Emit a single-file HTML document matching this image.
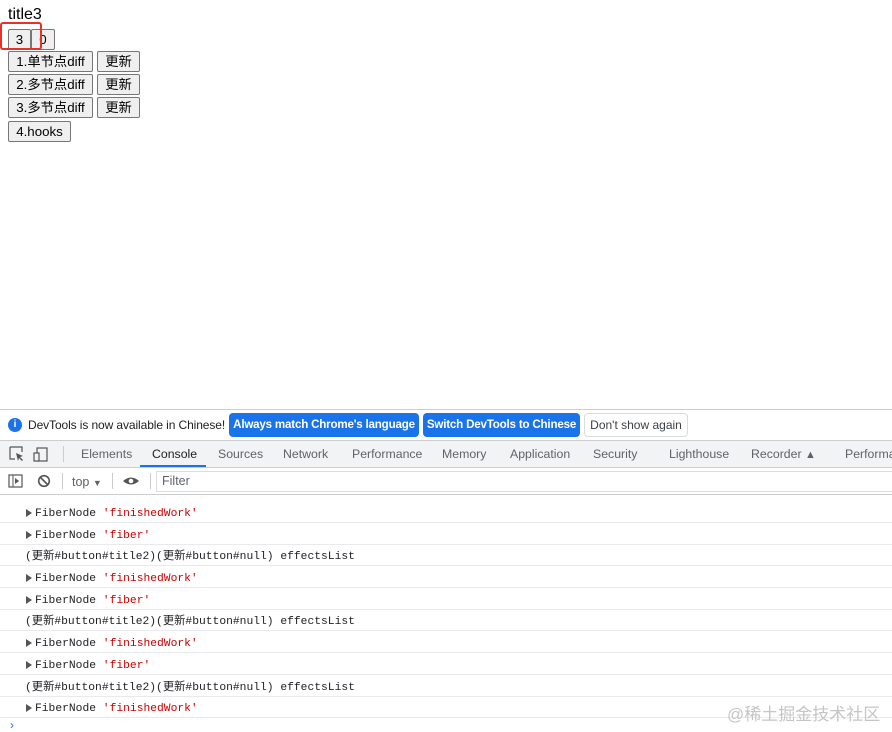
<!DOCTYPE html>
<html><head><style>
body{margin:0;width:892px;height:728px;overflow:hidden;background:#fff;font-family:"Liberation Sans","Noto Sans CJK SC",sans-serif;position:relative}
.a{position:absolute;white-space:nowrap}
.btn{position:absolute;height:21px;border:1px solid #767676;border-radius:2px;background:#efefef;font-size:13.3px;line-height:20px;text-align:center;box-sizing:border-box;color:#000}
.tab{position:absolute;top:447px;font-size:12.3px;color:#5f6368}
.row{position:absolute;left:0;width:892px;height:21.7px;border-bottom:1px solid #e8eaed;box-sizing:border-box;font-family:"Liberation Mono","Noto Sans CJK SC",monospace;font-size:11.3px;line-height:22px;padding-top:2px;color:#202124}
.tri{display:inline-block;width:0;height:0;border-left:6px solid #555;border-top:4px solid transparent;border-bottom:4px solid transparent;margin:0 3px 0 26px;vertical-align:-1px}
.s{color:#c80000}
.bb{position:absolute;top:413px;height:24px;background:#1a73e8;border-radius:4px;color:#fff;font-size:11.6px;font-weight:bold;line-height:24px;text-align:center;letter-spacing:-0.2px}
</style></head><body>
<div class="a" style="left:8px;top:6px;font-size:16px">title3</div>
<div class="btn" style="left:8px;top:29px;width:23px">3</div>
<div class="btn" style="left:31px;top:29px;width:24px">0</div>
<div class="a" style="left:0;top:22px;width:42px;height:28px;border:2px solid #e8312a;border-radius:3px;box-sizing:border-box"></div>
<div class="btn" style="left:8px;top:51px;width:85px">1.单节点diff</div>
<div class="btn" style="left:97px;top:51px;width:43px">更新</div>
<div class="btn" style="left:8px;top:74px;width:85px">2.多节点diff</div>
<div class="btn" style="left:97px;top:74px;width:43px">更新</div>
<div class="btn" style="left:8px;top:97px;width:85px">3.多节点diff</div>
<div class="btn" style="left:97px;top:97px;width:43px">更新</div>
<div class="btn" style="left:8px;top:121px;width:63px">4.hooks</div>

<div class="a" style="left:0;top:409px;width:892px;height:1px;background:#cbcdd1"></div>
<div class="a" style="left:8px;top:418px;width:14px;height:14px;border-radius:50%;background:#1a73e8;color:#fff;font-size:10px;font-weight:bold;text-align:center;line-height:14px">i</div>
<div class="a" style="left:28px;top:418px;font-size:12px;color:#202124;letter-spacing:-0.1px">DevTools is now available in Chinese!</div>
<div class="bb" style="left:229px;width:190px">Always match Chrome's language</div>
<div class="bb" style="left:423px;width:157px">Switch DevTools to Chinese</div>
<div class="a" style="left:584px;top:413px;width:104px;height:24px;border:1px solid #dadce0;box-sizing:border-box;border-radius:4px;color:#3c4043;font-size:12px;line-height:22px;text-align:center">Don't show again</div>

<div class="a" style="left:0;top:440px;width:892px;height:28px;background:#f1f3f4;border-top:1px solid #cbcdd1;border-bottom:1px solid #cbcdd1;box-sizing:border-box"></div>
<svg class="a" style="left:9px;top:446px" width="50" height="16"><path d="M1 1h12v5M1 1v12h5" fill="none" stroke="#555" stroke-width="1.2"/><path d="M7 7l7 3-3 1 3 3-1 1-3-3-1 3z" fill="#555"/><rect x="28" y="2" width="10" height="13" fill="none" stroke="#555" stroke-width="1.2"/><rect x="25" y="7" width="5" height="8" fill="#f1f3f4" stroke="#555" stroke-width="1.2"/></svg>
<div class="a" style="left:63px;top:446px;width:1px;height:16px;background:#ccc"></div>
<div class="tab" style="left:81px">Elements</div>
<div class="tab" style="left:152px;color:#202124">Console</div>
<div class="a" style="left:140px;top:465px;width:66px;height:2px;background:#1a73e8"></div>
<div class="tab" style="left:218px">Sources</div>
<div class="tab" style="left:283px">Network</div>
<div class="tab" style="left:352px">Performance</div>
<div class="tab" style="left:442px">Memory</div>
<div class="tab" style="left:510px">Application</div>
<div class="tab" style="left:593px">Security</div>
<div class="tab" style="left:669px">Lighthouse</div>
<div class="tab" style="left:751px">Recorder <span style="font-size:11px">&#9650;</span></div>
<div class="tab" style="left:845px">Performance</div>

<svg class="a" style="left:8px;top:474px" width="150" height="16"><rect x="1" y="1" width="13" height="12" fill="none" stroke="#555" stroke-width="1.2"/><path d="M5 1v12" stroke="#555"/><path d="M7 4l4 3-4 3z" fill="#555"/><circle cx="36" cy="7" r="5.3" fill="none" stroke="#555" stroke-width="1.6"/><path d="M32 3l8 8" stroke="#555" stroke-width="1.6"/><path d="M115 7q8-7 16 0q-8 7-16 0z" fill="#555"/><circle cx="123" cy="7" r="2.3" fill="#fff"/></svg>
<div class="a" style="left:62px;top:473px;width:1px;height:16px;background:#ccc"></div>
<div class="a" style="left:72px;top:475px;font-size:12.5px;color:#5f6368">top <span style="font-size:9px">&#9660;</span></div>
<div class="a" style="left:112px;top:473px;width:1px;height:16px;background:#ccc"></div>
<div class="a" style="left:150px;top:473px;width:1px;height:16px;background:#ccc"></div>
<div class="a" style="left:156px;top:471px;width:740px;height:21px;border:1px solid #dadce0;box-sizing:border-box;font-size:12.5px;color:#5f6368;padding:2px 0 0 5px">Filter</div>
<div class="a" style="left:0;top:494px;width:892px;height:1px;background:#cbcdd1"></div>

<div class="row" style="top:501px"><span class="tri"></span>FiberNode <span class="s">'finishedWork'</span></div>
<div class="row" style="top:523px"><span class="tri"></span>FiberNode <span class="s">'fiber'</span></div>
<div class="row" style="top:544px;padding-left:25px">(更新#button#title2)(更新#button#null)  effectsList</div>
<div class="row" style="top:566px"><span class="tri"></span>FiberNode <span class="s">'finishedWork'</span></div>
<div class="row" style="top:588px"><span class="tri"></span>FiberNode <span class="s">'fiber'</span></div>
<div class="row" style="top:609px;padding-left:25px">(更新#button#title2)(更新#button#null)  effectsList</div>
<div class="row" style="top:631px"><span class="tri"></span>FiberNode <span class="s">'finishedWork'</span></div>
<div class="row" style="top:653px"><span class="tri"></span>FiberNode <span class="s">'fiber'</span></div>
<div class="row" style="top:675px;padding-left:25px">(更新#button#title2)(更新#button#null)  effectsList</div>
<div class="row" style="top:696px"><span class="tri"></span>FiberNode <span class="s">'finishedWork'</span></div>
<div class="a" style="left:10px;top:718px;color:#1a73e8;font-size:12px">›</div>
<div class="a" style="left:727px;top:700px;font-size:17px;color:#c5c5c5">@稀土掘金技术社区</div>
</body></html>
